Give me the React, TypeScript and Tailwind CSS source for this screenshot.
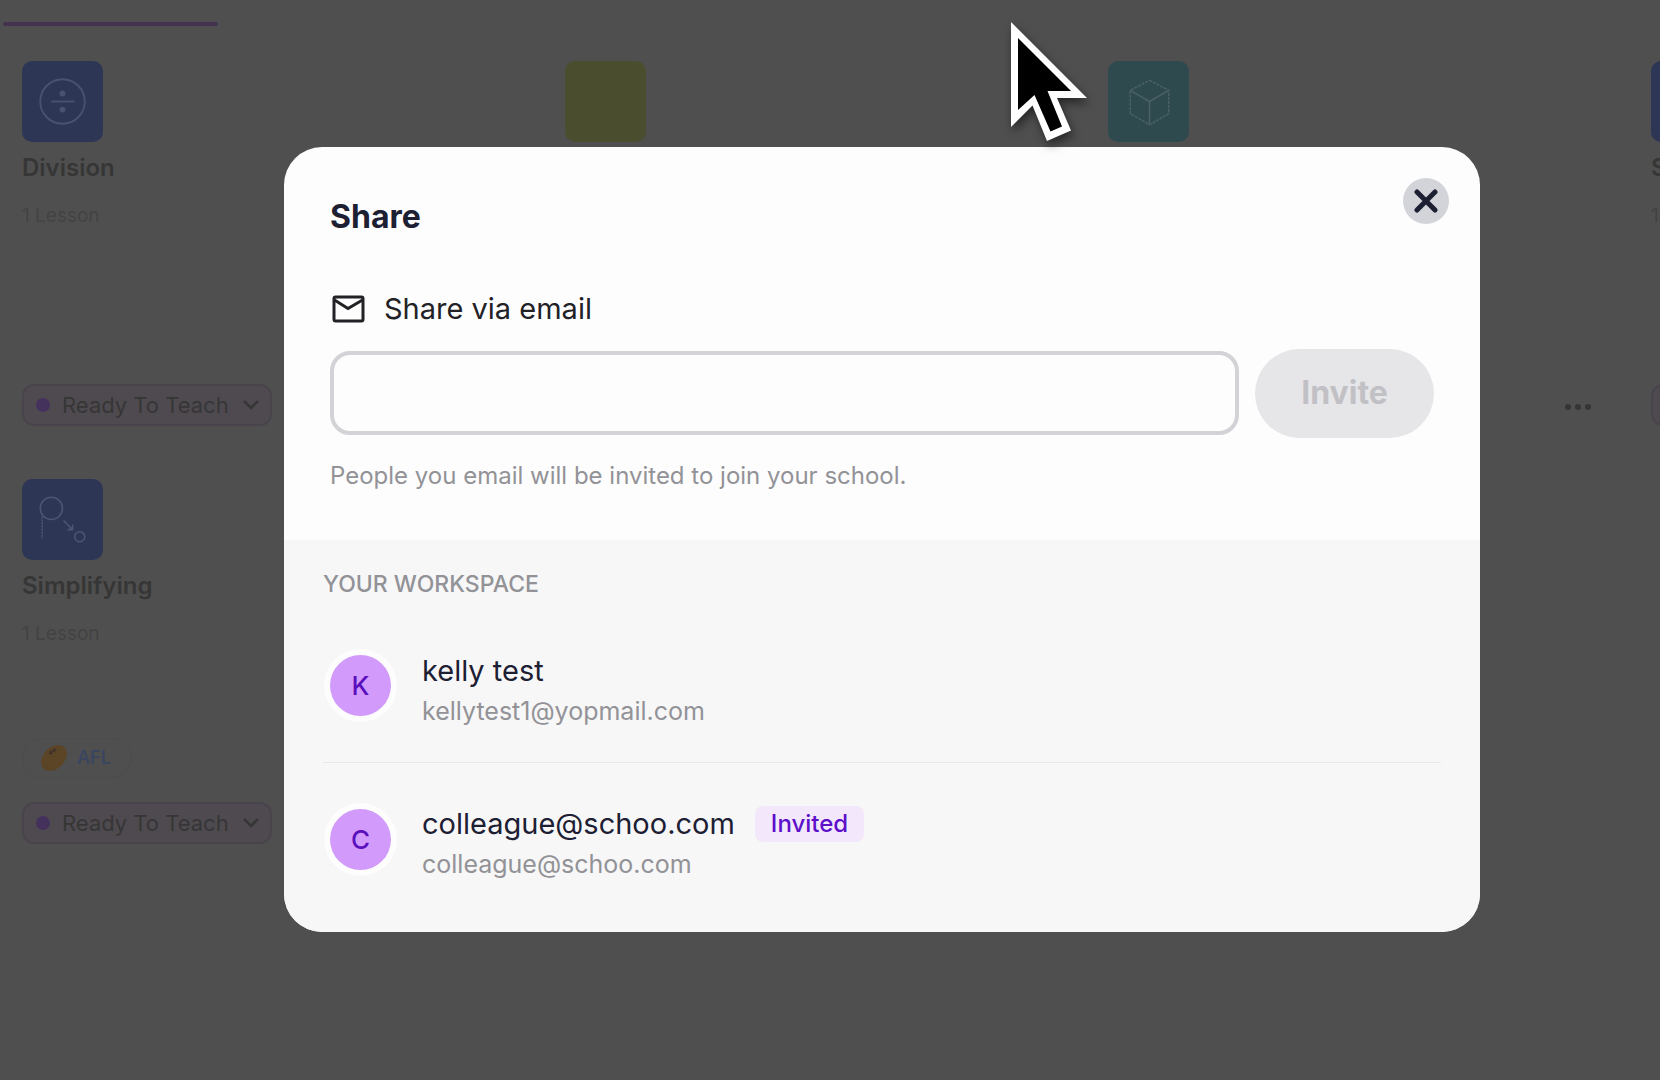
import type { ReactNode } from "react";

type Lesson = {
  title: string;
  tile: string;
  icon: ReactNode;
  tag?: string;
  menu?: boolean;
};

const divisionIcon = (
  <svg viewBox="0 0 80 80" className="size-full" fill="none" stroke="#475370" strokeWidth="1.8">
    <circle cx="40" cy="40" r="22" />
    <path d="M29 40h23" />
    <circle cx="40" cy="32" r="2" fill="#475370" />
    <circle cx="40" cy="48" r="2" fill="#475370" />
  </svg>
);

const simplifyIcon = (
  <svg viewBox="0 0 80 80" className="size-full" fill="none" stroke="#4a5674" strokeWidth="1.5">
    <circle cx="29" cy="29" r="11" />
    <path d="M20 37v22" strokeDasharray="2 1" />
    <path d="M41 41l9 9M50 45v5h-5" />
    <circle cx="57" cy="57" r="5" />
  </svg>
);

const cubeIcon = (
  <svg viewBox="0 0 80 80" className="size-full" fill="none" stroke="#4a6064" strokeWidth="1.5">
    <path d="M41 19l19 10v23L41 63 22 52V29z" strokeDasharray="3 1" />
    <path d="M22 29l19 11 19-11M41 40v23" />
  </svg>
);

const lessons: Lesson[] = [
  { title: "Division", tile: "bg-[#2d3755]", icon: divisionIcon },
  { title: "", tile: "bg-[#4a4e2e]", icon: null },
  { title: "", tile: "bg-[#2f4a4f]", icon: cubeIcon, menu: true },
  { title: "Simplifying", tile: "bg-[#2d3755]", icon: divisionIcon },
  { title: "Simplifying", tile: "bg-[#2d3755]", icon: simplifyIcon, tag: "AFL" },
];

const members = [
  { initial: "K", name: "kelly test", email: "kellytest1@yopmail.com", invited: false },
  { initial: "C", name: "colleague@schoo.com", email: "colleague@schoo.com", invited: true },
];

function StatusPill() {
  return (
    <button className="flex h-[42px] w-[250px] shrink-0 items-center rounded-xl border-2 border-[#49444c] bg-[#4e4a4f] pl-3 text-[22px] text-[#363636]">
      <span className="mr-3 size-3.5 rounded-full bg-[#44325d]" />
      Ready To Teach
      <svg viewBox="0 0 16 10" className="ml-3.5 h-2.5 w-4" fill="none" stroke="#363636" strokeWidth="2.5">
        <path d="M1 1l7 7 7-7" />
      </svg>
    </button>
  );
}

function Football() {
  return (
    <svg viewBox="0 0 28 28" className="size-7">
      <ellipse cx="15" cy="14" rx="15" ry="10.5" fill="#5c4427" transform="rotate(-45 15 14)" />
      <path d="M10 10l7-5M11 7l2 3M14 5l2 3" stroke="#3b3127" strokeWidth="1.5" fill="none" />
    </svg>
  );
}

function MailIcon() {
  return (
    <svg viewBox="0 0 38 38" className="size-[38px]" fill="none" stroke="#222226" strokeWidth="3">
      <rect x="4" y="7" width="29" height="24" rx="1.5" />
      <path d="M4.500 10L18 18.500 32.500 10" />
    </svg>
  );
}

function LessonCard({ lesson }: { lesson: Lesson }) {
  return (
    <article className="flex min-h-[365px] flex-col items-start">
      <div className={`size-[81px] rounded-[10px] ${lesson.tile}`}>{lesson.icon}</div>
      {lesson.title && (
        <>
          <h3 className="mt-2.5 text-2xl leading-8 font-semibold text-[#363636]">{lesson.title}</h3>
          <p className="mt-[18px] text-[19px] leading-7 text-[#434343]">1 Lesson</p>
        </>
      )}
      <div className="mt-auto flex w-full flex-col items-start gap-6">
        {lesson.tag && (
          <span className="flex h-10 items-center gap-2.5 rounded-full border border-[#4c4c50] pr-5 pl-4 text-lg font-semibold text-[#3a4560]">
            <Football />
            {lesson.tag}
          </span>
        )}
        <div className="flex w-full items-center justify-between pr-[60px]">
          <StatusPill />
          {lesson.menu && (
            <button aria-label="More" className="flex gap-1 pt-1">
              <span className="size-1.5 rounded-full bg-[#353535]" />
              <span className="size-1.5 rounded-full bg-[#353535]" />
              <span className="size-1.5 rounded-full bg-[#353535]" />
            </button>
          )}
        </div>
      </div>
    </article>
  );
}

function ShareDialog() {
  return (
    <div
      role="dialog"
      aria-labelledby="share-title"
      className="relative flex-1 overflow-hidden rounded-[38px] bg-[#fdfdfd]"
    >
      <button
        aria-label="Close"
        className="absolute top-[31px] right-[31px] flex size-[46px] items-center justify-center rounded-full bg-[#d3d3da]"
      >
        <svg viewBox="0 0 24 24" className="size-6" fill="none" stroke="#1d2033" strokeWidth="5" strokeLinecap="round">
          <path d="M3 3l18 18M21 3L3 21" />
        </svg>
      </button>

      <section className="px-[46px] pt-12 pb-[46px]">
        <h2 id="share-title" className="text-[32px] leading-11 font-bold text-[#1d2033]">
          Share
        </h2>
        <label htmlFor="invite-email" className="mt-[50px] flex items-center gap-4 text-[29px] leading-10 text-[#222226]">
          <MailIcon />
          Share via email
        </label>
        <div className="mt-5 flex items-center gap-4">
          <input
            id="invite-email"
            type="email"
            className="h-[84px] min-w-0 flex-1 rounded-[20px] border-4 border-[#d3d3d7] bg-[#fdfdfd] px-6 text-2xl outline-none"
          />
          <button disabled className="h-[89px] w-[179px] rounded-full bg-[#e6e6e9] text-[32px] font-bold text-[#c1c1c5]">
            Invite
          </button>
        </div>
        <p className="mt-5 text-2xl leading-9 text-[#929297]">People you email will be invited to join your school.</p>
      </section>

      <section className="bg-[#f7f7f8] px-[39px] pt-[26px] pb-4">
        <h3 className="text-[23px] leading-9 font-medium text-[#929297]">YOUR WORKSPACE</h3>
        <ul className="mt-2 divide-y divide-[#e8e8ea]">
          {members.map((member) => (
            <li key={member.email} className="flex h-[153px] items-center gap-[31px] px-[7px]">
              <span className="flex size-[61px] items-center justify-center rounded-full bg-[#d29bfb] text-[26px] font-medium text-[#5b10bd] ring-[6px] ring-[#fdfdfd]">
                {member.initial}
              </span>
              <div className="pt-2.5">
                <div className="flex items-center gap-5 text-[29px] leading-10 text-[#1d2033]">
                  {member.name}
                  {member.invited && (
                    <span className="rounded-lg bg-[#f3e7fc] px-4 text-2xl leading-9 font-medium text-[#5d0fca]">
                      Invited
                    </span>
                  )}
                </div>
                <p className="text-[25px] leading-10 text-[#929297]">{member.email}</p>
              </div>
            </li>
          ))}
        </ul>
      </section>
    </div>
  );
}

export default function App() {
  return (
    <div className="relative min-h-screen overflow-hidden bg-[#4f4f4f] font-['Inter',sans-serif]">
      <main aria-hidden="true" className="pt-[22px]">
        <div className="ml-[3px] h-1 w-[215px] rounded-full bg-[#43334f]" />
        <div className="mt-[35px] ml-[22px] grid w-max grid-cols-[repeat(4,543px)] gap-y-[53px]">
          {lessons.map((lesson, i) => (
            <LessonCard key={i} lesson={lesson} />
          ))}
        </div>
      </main>

      <div className="absolute inset-0 flex items-center pr-[180px] pb-0.5 pl-[284px]">
        <ShareDialog />
      </div>

      {/* Pointer */}
      <svg
        viewBox="0 0 78 122"
        className="pointer-events-none absolute top-[21px] left-[1010px] h-[122px] w-[78px] overflow-visible drop-shadow-[2px_5px_5px_rgba(0,0,0,0.5)]"
      >
        <path d="M1 1v105l21.500-21.500L37 120l24-10.500L47 77h30z" fill="#fff" />
        <path d="M8 17v72l16.500-15L40.500 110.500l11.500-5L37.500 70H61z" fill="#000" />
      </svg>
    </div>
  );
}
